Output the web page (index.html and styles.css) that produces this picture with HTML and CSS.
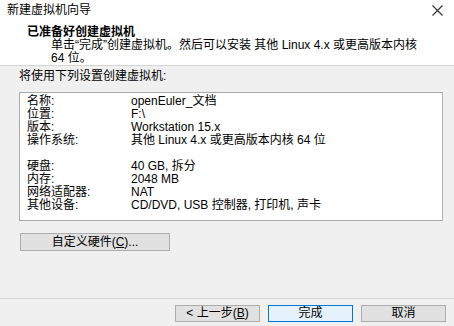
FILE: index.html
```html
<!DOCTYPE html>
<html lang="zh-CN">
<head>
  <meta charset="UTF-8">
  <title>新建虚拟机向导</title>
  <link rel="stylesheet" href="styles.css">
</head>
<body>

<div class="wizard">
  <div class="titlebar">
    <span class="title">新建虚拟机向导</span>
    <span class="close">
      <svg width="11" height="11" viewBox="0 0 11 11">
        <path d="M0.5 0.5 L10.5 10.5 M10.5 0.5 L0.5 10.5" stroke="#333" stroke-width="1.1" fill="none"/>
      </svg>
    </span>
  </div>

  <div class="header">
    <div class="header-title">已准备好创建虚拟机</div>
    <div class="header-desc">单击“完成”创建虚拟机。然后可以安装 其他 Linux 4.x 或更高版本内核<br>64 位。</div>
  </div>

  <div class="content">
    <div class="intro">将使用下列设置创建虚拟机:</div>

    <div class="summary">
      <div class="row"><span class="key">名称:</span><span>openEuler_文档</span></div>
      <div class="row"><span class="key">位置:</span><span>F:\</span></div>
      <div class="row"><span class="key">版本:</span><span>Workstation 15.x</span></div>
      <div class="row"><span class="key">操作系统:</span><span>其他 Linux 4.x 或更高版本内核 64 位</span></div>
      <div class="row"></div>
      <div class="row"><span class="key">硬盘:</span><span>40 GB, 拆分</span></div>
      <div class="row"><span class="key">内存:</span><span>2048 MB</span></div>
      <div class="row"><span class="key">网络适配器:</span><span>NAT</span></div>
      <div class="row"><span class="key">其他设备:</span><span>CD/DVD, USB 控制器, 打印机, 声卡</span></div>
    </div>

    <button class="btn custom">自定义硬件(<u>C</u>)...</button>
  </div>

  <div class="footer">
    <button class="btn">&lt; 上一步(<u>B</u>)</button>
    <button class="btn primary">完成</button>
    <button class="btn">取消</button>
  </div>
</div>

</body>
</html>
```

FILE: styles.css
```css
* {
  box-sizing: border-box;
}

body {
  margin: 0;
  background: #f0f0f0;
  font-family: "Liberation Sans", "Noto Sans CJK SC", sans-serif;
  font-size: 12px;
  color: #000;
}

.wizard {
  width: 454px;
  height: 326px;
  display: flex;
  flex-direction: column;
}

.titlebar {
  height: 22px;
  background: #fff;
  display: flex;
  align-items: flex-start;
  justify-content: space-between;
  padding: 0 11px 0 7px;
}

.titlebar .title {
  line-height: 20px;
}

.close {
  display: flex;
  padding-top: 5px;
}

.header {
  height: 44px;
  background: #fff;
  border-bottom: 1px solid #d5d5d5;
  padding: 4px 0 0 27px;
}

.header-title {
  font-weight: bold;
  line-height: 13px;
}

.header-desc {
  padding-left: 24px;
  line-height: 13px;
}

.content {
  flex: 1;
  padding: 3px 11px 0 19px;
}

.intro {
  line-height: 14px;
  margin-bottom: 9px;
}

.summary {
  height: 129px;
  background: #fff;
  border: 1px solid #a9a9a9;
  border-right-color: #b4b4b4;
  padding: 2px 7px;
}

.row {
  display: flex;
  height: 13px;
  line-height: 13px;
}

.row .key {
  width: 104px;
}

.btn {
  font-family: inherit;
  font-size: 12px;
  color: #000;
  background: #e1e1e1;
  border: 1px solid #adadad;
  padding: 0;
  height: 17px;
  width: 85px;
  line-height: 15px;
}

.btn.custom {
  margin: 12px 0 0 1px;
  width: 150px;
  height: 18px;
}

.btn.primary {
  background: #e5f1fb;
  border-color: #0078d7;
}

.footer {
  height: 28px;
  border-top: 1px solid #d5d5d5;
  display: flex;
  justify-content: flex-end;
  gap: 8px;
  padding: 6px 8px 0 0;
}
```
